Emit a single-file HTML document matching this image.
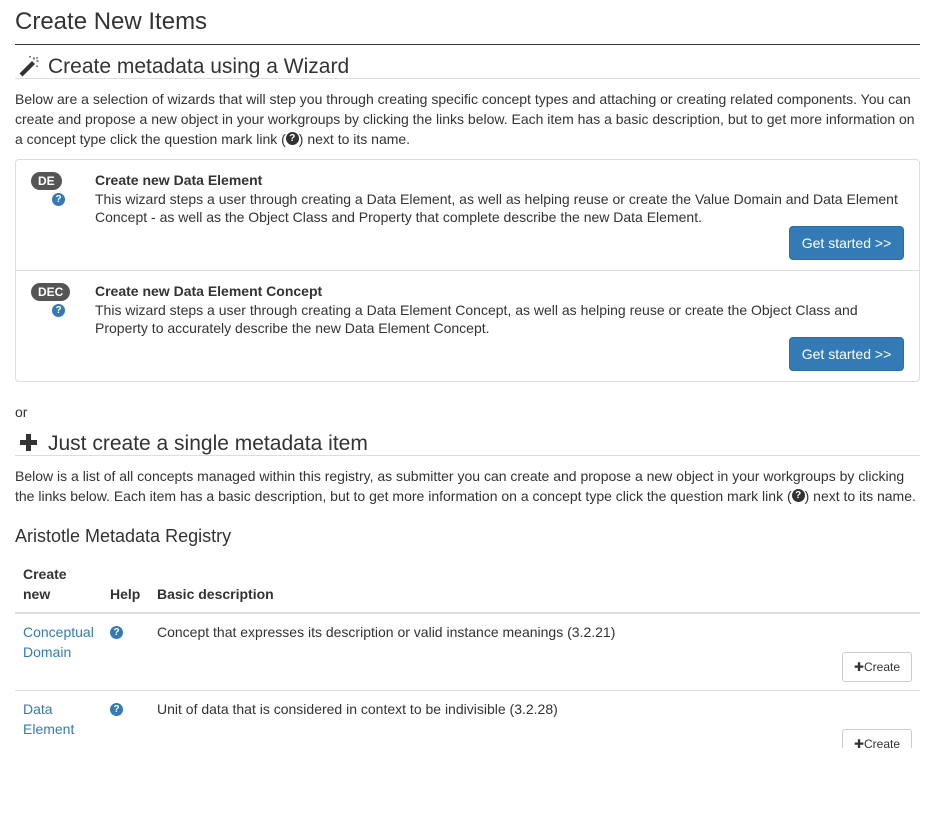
<!DOCTYPE html>
<html><head><meta charset="utf-8"><style>
body{margin:0;width:935px;height:826px;background:#fff;font-family:"Liberation Sans",sans-serif;color:#333;font-size:14px;position:relative;overflow:hidden}
.a{position:absolute;white-space:nowrap}
.p{line-height:20px}
.q{display:inline-block;width:13px;height:13px;border-radius:50%;background:#333;color:#fff;font-size:10px;font-weight:bold;line-height:13px;text-align:center;vertical-align:middle;position:relative;top:-2px}
.qa{position:absolute;display:block;width:13px;height:13px;border-radius:50%;background:#337ab7;color:#fff;font-size:10px;font-weight:bold;line-height:13px;text-align:center}
.badge{position:absolute;background:#555;color:#fff;font-weight:bold;font-size:12px;border-radius:9px;height:18px;line-height:18px;padding:0 7px}
.btn{position:absolute;background:#337ab7;color:#fff;border:1px solid #2e6da4;border-radius:4px;width:115px;height:34px;line-height:32px;text-align:center;font-size:14px;box-sizing:border-box}
.cb{position:absolute;border:1px solid #ccc;border-radius:3px;background:#fff;width:70px;height:30px;line-height:28px;text-align:center;font-size:12px;box-sizing:border-box;color:#333}
.link{color:#337ab7}
</style></head><body>
<div class="a" style="left:15px;top:8px;font-size:24px;color:#333">Create New Items</div>
<div class="a" style="left:15px;top:44px;width:905px;height:1px;background:#333"></div>
<svg class="a" style="left:18px;top:55px" width="22" height="22" viewBox="0 0 22 22"><path d="M1.5 18.5 L14 6 L17 9 L4.5 21.5Z" fill="#333"/><path d="M16 2.5v2M18.5 6h2M12 1v1.5M19 10.5v1.5M19.5 2.5l-1 1" stroke="#333" stroke-width="1.3"/></svg>
<div class="a" style="left:48px;top:55px;font-size:21px">Create metadata using a Wizard</div>
<div class="a" style="left:15px;top:78px;width:905px;height:1px;background:#ddd"></div>
<div class="a p" style="left:15px;top:89px;white-space:normal;width:905px">Below are a selection of wizards that will step you through creating specific concept types and attaching or creating related components. You can create and propose a new object in your workgroups by clicking the links below. Each item has a basic description, but to get more information on a concept type click the question mark link (<span class="q">?</span>) next to its name.</div>
<div class="a" style="left:15px;top:159px;width:903px;height:221px;border:1px solid #ddd;border-radius:4px"></div>
<div class="a" style="left:16px;top:270px;width:903px;height:1px;background:#ddd"></div>
<div class="badge" style="left:31px;top:172px">DE</div>
<span class="qa" style="left:52px;top:193px">?</span>
<div class="a" style="left:95px;top:172px;font-weight:bold">Create new Data Element</div>
<div class="a" style="left:95px;top:190px;line-height:18px;white-space:normal;width:815px">This wizard steps a user through creating a Data Element, as well as helping reuse or create the Value Domain and Data Element Concept - as well as the Object Class and Property that complete describe the new Data Element.</div>
<div class="btn" style="left:789px;top:226px">Get started &gt;&gt;</div>
<div class="badge" style="left:31px;top:283px">DEC</div>
<span class="qa" style="left:52px;top:304px">?</span>
<div class="a" style="left:95px;top:283px;font-weight:bold">Create new Data Element Concept</div>
<div class="a" style="left:95px;top:301px;line-height:18px;white-space:normal;width:800px">This wizard steps a user through creating a Data Element Concept, as well as helping reuse or create the Object Class and Property to accurately describe the new Data Element Concept.</div>
<div class="btn" style="left:789px;top:337px">Get started &gt;&gt;</div>
<div class="a" style="left:15px;top:404px">or</div>
<svg class="a" style="left:20px;top:434px" width="17" height="17" viewBox="0 0 17 17"><path d="M6 0h5v6h6v5h-6v6h-5v-6h-6v-5h6z" fill="#333"/></svg>
<div class="a" style="left:48px;top:432px;font-size:21px">Just create a single metadata item</div>
<div class="a" style="left:15px;top:455px;width:905px;height:1px;background:#ddd"></div>
<div class="a p" style="left:15px;top:466px;white-space:normal;width:910px">Below is a list of all concepts managed within this registry, as submitter you can create and propose a new object in your workgroups by clicking the links below. Each item has a basic description, but to get more information on a concept type click the question mark link (<span class="q">?</span>) next to its name.</div>
<div class="a" style="left:15px;top:526px;font-size:18px">Aristotle Metadata Registry</div>
<div class="a p" style="left:23px;top:564px;font-weight:bold">Create<br>new</div>
<div class="a" style="left:110px;top:586px;font-weight:bold">Help</div>
<div class="a" style="left:157px;top:586px;font-weight:bold">Basic description</div>
<div class="a" style="left:15px;top:612px;width:905px;height:2px;background:#ddd"></div>
<div class="a p link" style="left:23px;top:622px">Conceptual<br>Domain</div>
<span class="qa" style="left:110px;top:626px">?</span>
<div class="a" style="left:157px;top:624px">Concept that expresses its description or valid instance meanings (3.2.21)</div>
<div class="cb" style="left:842px;top:652px">✚Create</div>
<div class="a" style="left:15px;top:690px;width:905px;height:1px;background:#ddd"></div>
<div class="a p link" style="left:23px;top:699px">Data<br>Element</div>
<span class="qa" style="left:110px;top:703px">?</span>
<div class="a" style="left:157px;top:701px">Unit of data that is considered in context to be indivisible (3.2.28)</div>
<div class="cb" style="left:842px;top:729px">✚Create</div>
<div class="a" style="left:0;top:748px;width:935px;height:78px;background:#fff"></div>
</body></html>
